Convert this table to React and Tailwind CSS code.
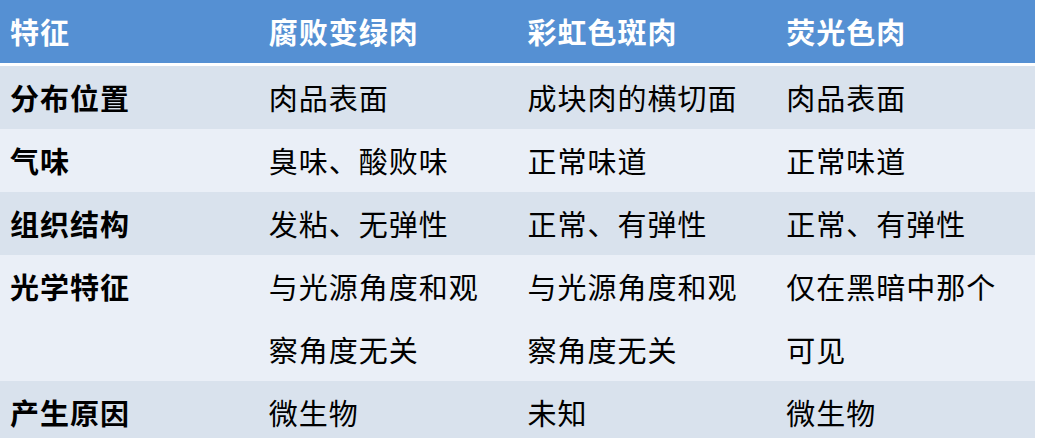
import React from 'react';

const HEAD = ['特征', '腐败变绿肉', '彩虹色斑肉', '荧光色肉'];

const ROWS = [
  ['分布位置', '肉品表面', '成块肉的横切面', '肉品表面'],
  ['气味', '臭味、酸败味', '正常味道', '正常味道'],
  ['组织结构', '发粘、无弹性', '正常、有弹性', '正常、有弹性'],
  ['光学特征', '与光源角度和观察角度无关', '与光源角度和观察角度无关', '仅在黑暗中那个可见'],
  ['产生原因', '微生物', '未知', '微生物'],
];

export default function App() {
  return (
    <div
      className="h-[438px] w-[1038px] overflow-hidden bg-white"
      style={{ fontFamily: '"Noto Sans CJK SC", "Noto Sans", sans-serif' }}
    >
      <table className="w-[1035px] table-fixed border-collapse text-[29px] leading-[63px] tracking-[1px]">
        <thead>
          <tr className="h-[64px] border-b-[3px] border-white bg-[#5590d3] text-left text-white">
            {HEAD.map((h) => (
              <th key={h} className="px-[10px] py-0 align-middle font-semibold leading-[61px]">
                {h}
              </th>
            ))}
          </tr>
        </thead>
        <tbody>
          {ROWS.map((row, i) => (
            <tr key={row[0]} className={i % 2 === 0 ? 'bg-[#d9e2ed]' : 'bg-[#eaeff7]'}>
              {row.map((cell, j) => (
                <td
                  key={j}
                  className={`px-[10px] py-0 align-top text-black ${j === 0 ? 'font-bold' : 'font-normal'}`}
                >
                  {cell}
                </td>
              ))}
            </tr>
          ))}
        </tbody>
      </table>
    </div>
  );
}
